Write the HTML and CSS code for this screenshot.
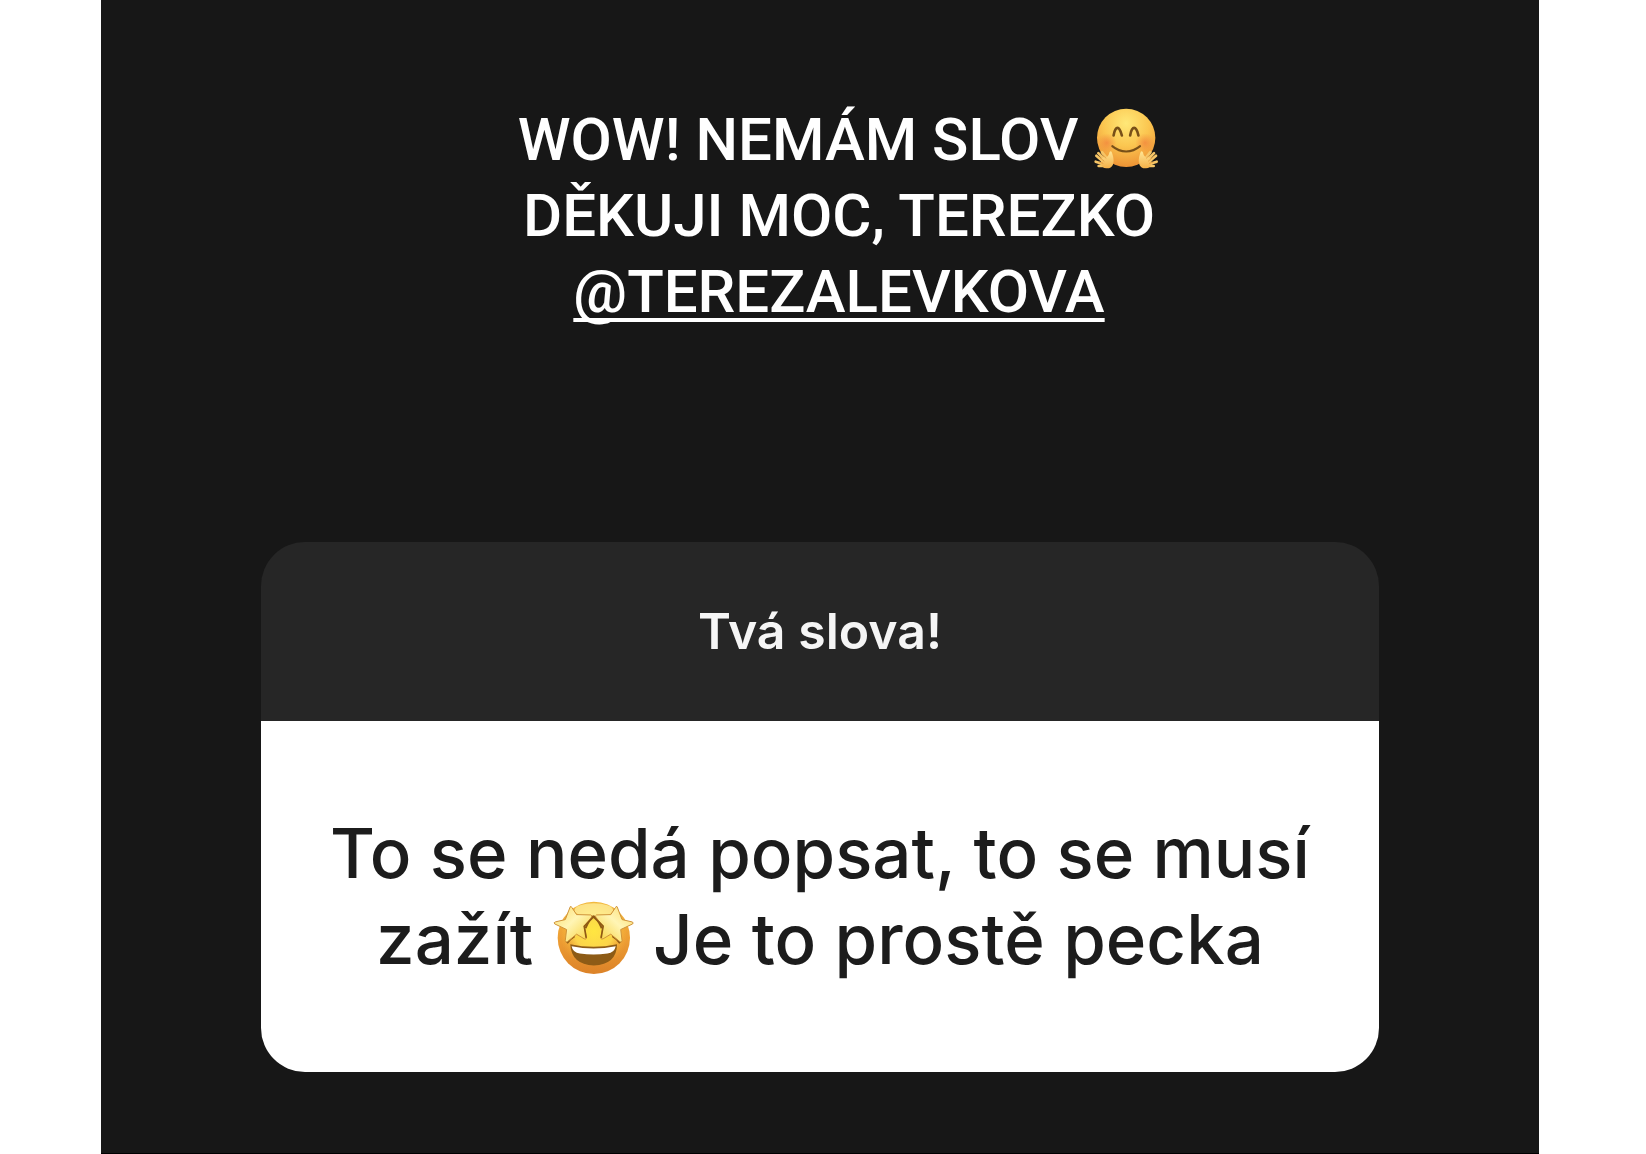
FILE: index.html
```html
<!DOCTYPE html>
<html lang="cs">
<head>
<meta charset="utf-8">
<meta name="viewport" content="width=device-width, initial-scale=1">
<title>Tvá slova!</title>
<link rel="stylesheet" href="styles.css">
</head>
<body>
<main class="story">
  <p class="headline">
    WOW! NEMÁM SLOV
    <svg class="emoji-hug" viewBox="43 38 200 190" role="img" aria-label="Objímající smajlík">
      <defs>
        <radialGradient id="hugFace" cx="50%" cy="25%" r="78%">
          <stop offset="0" stop-color="#ffe878"/>
          <stop offset=".5" stop-color="#fbc650"/>
          <stop offset="1" stop-color="#ec8e32"/>
        </radialGradient>
        <radialGradient id="hugCheek">
          <stop offset="0" stop-color="#f0763a" stop-opacity=".6"/>
          <stop offset="1" stop-color="#f0763a" stop-opacity="0"/>
        </radialGradient>
        <linearGradient id="hugHand" x1="0" y1="0" x2="0" y2="1">
          <stop offset="0" stop-color="#ffe595"/>
          <stop offset="1" stop-color="#f3b048"/>
        </linearGradient>
        <g id="hand">
          <g fill="none" stroke="#f6c566" stroke-width="8" stroke-linecap="round">
            <path d="M72 202 52 185M78 197 58 177M84 193 69 174M72 210 50 203M75 216 59 216"/>
          </g>
          <path fill="url(#hugHand)" d="M66 196Q76 186 83 190Q91 183 92 174Q97 168 100 178Q107 199 102 212Q97 224 82 223Q69 222 66 210Z"/>
          <path fill="none" stroke="#d98b32" stroke-width="2" d="M62 190 76 202M60 204 73 208M72 184 82 193"/>
        </g>
      </defs>
      <circle cx="142" cy="131" r="88" fill="url(#hugFace)"/>
      <circle cx="84" cy="146" r="29" fill="url(#hugCheek)"/>
      <circle cx="199" cy="146" r="29" fill="url(#hugCheek)"/>
      <g fill="none" stroke="#785018" stroke-linecap="round">
        <path stroke-width="8" d="M104 124Q108 101 116 101Q123 101 129 124M154 124Q158 101 166 101Q174 101 179 124"/>
        <path stroke-width="6" d="M100 156Q119 172 142 172Q165 172 184 156"/>
      </g>
      <use href="#hand"/>
      <use href="#hand" transform="translate(284 0) scale(-1 1)"/>
    </svg><br>
    DĚKUJI MOC, TEREZKO<br>
    <a class="mention" href="#terezalevkova">@TEREZALEVKOVA</a>
  </p>
  <section class="card">
    <h1 class="card-title">Tvá slova!</h1>
    <p class="card-body">
      To se nedá popsat, to se musí<br>
      zažít
      <svg class="emoji-star" viewBox="36 32 248 232" role="img" aria-label="Smajlík s hvězdami v očích">
        <defs>
          <linearGradient id="starFace" x1="0" y1="0" x2="0" y2="1">
            <stop offset="0" stop-color="#f2ba40"/>
            <stop offset=".5" stop-color="#ee9f34"/>
            <stop offset="1" stop-color="#dc8228"/>
          </linearGradient>
          <radialGradient id="starGlow" cx="50%" cy="42%" r="54%">
            <stop offset="0" stop-color="#ffe641"/>
            <stop offset=".55" stop-color="#fbd44a"/>
            <stop offset="1" stop-color="#f3a737" stop-opacity="0"/>
          </radialGradient>
          <linearGradient id="starEye" x1="0" y1="0" x2="1" y2="1">
            <stop offset="0" stop-color="#fbd968"/>
            <stop offset=".45" stop-color="#fff5b5"/>
            <stop offset="1" stop-color="#f7cf32"/>
          </linearGradient>
          <path id="star" d="M90 55Q93 53 95 58L109 79L152 80Q158 82 153 88L132 114L139 149Q139 155 132 152L109 138L81 161Q75 164 75 157L79 124L43 107Q39 103 45 101L75 94Z"/>
        </defs>
        <circle cx="161" cy="149" r="109" fill="url(#starFace)"/>
        <circle cx="161" cy="145" r="98" fill="url(#starGlow)"/>
        <ellipse cx="161" cy="66" rx="58" ry="21" fill="#fff2a0" opacity=".75"/>
        <path fill="#8d5b16" d="M90 168Q160 184 231 168Q230 229 161 232Q93 229 90 168Z"/>
        <path fill="#fff" d="M94 174Q160 188 227 174Q223 194 202 196Q160 202 119 196Q98 194 94 174Z"/>
        <path fill="none" stroke="#8f5a14" stroke-width="6" d="M136 120Q152 84 160 84Q168 84 185 120M80 165Q88 153 103 144M240 165Q232 153 217 144"/>
        <use href="#star" fill="url(#starEye)" stroke="#cf9238" stroke-width="3"/>
        <use href="#star" transform="translate(321 0) scale(-1 1)" fill="url(#starEye)" stroke="#cf9238" stroke-width="3"/>
        <path fill="none" stroke="#8f5a14" stroke-width="5" stroke-linejoin="round" d="M138 149 132 114 160 86 189 114 183 149"/>
      </svg>
      Je to prostě pecka
    </p>
  </section>
</main>
</body>
</html>
```
FILE: styles.css
```css
* {
  box-sizing: border-box;
}

body {
  margin: 0;
  padding: 0 107px 0 101px;
  background: #fff;
}

.story {
  min-height: 100vh;
  padding: 102px 160px 80px;
  border-bottom: 1px solid #000;
  background: #171717;
}

.headline {
  margin: 0 0 212px;
  padding-left: 38px;
  color: #fff;
  font: 500 60px/76px Roboto, "Liberation Sans", sans-serif;
  text-align: center;
}

.mention {
  color: inherit;
  text-decoration: underline;
  text-decoration-thickness: 4px;
  text-underline-offset: 6px;
  text-decoration-skip-ink: none;
}

.emoji-hug {
  width: 67px;
  height: 63px;
  vertical-align: -10px;
}

.card {
  overflow: hidden;
  border-radius: 44px;
  font-family: Inter, "Liberation Sans", sans-serif;
  text-align: center;
}

.card-title {
  margin: 0;
  padding: 60px 40px;
  background: #262626;
  color: #f5f5f5;
  font-size: 50px;
  font-weight: 600;
  line-height: 59px;
}

.card-body {
  margin: 0;
  padding: 89px 40px 90px;
  background: #fff;
  color: #1c1c1c;
  font-size: 69px;
  font-weight: 500;
  line-height: 86px;
}

.emoji-star {
  width: 83px;
  height: 77px;
  vertical-align: -12px;
}
```
